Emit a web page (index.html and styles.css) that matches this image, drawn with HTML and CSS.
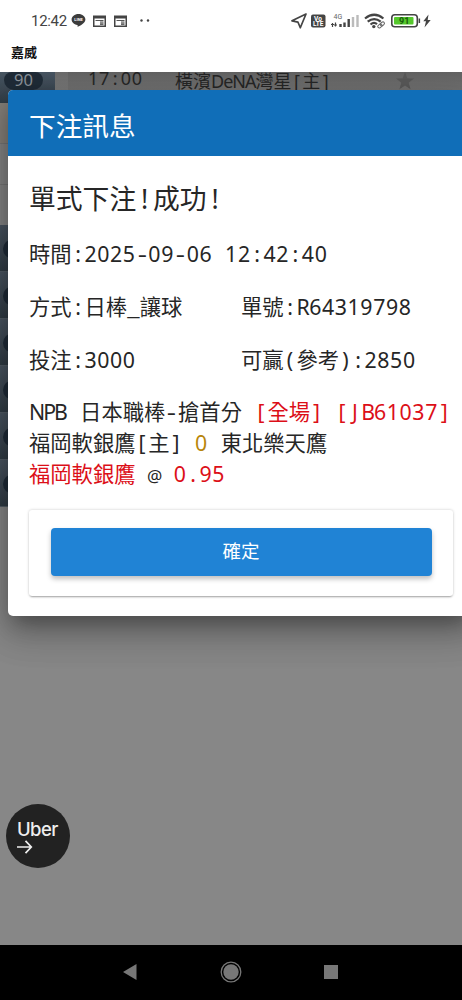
FILE: index.html
```html
<!DOCTYPE html>
<html lang="zh-Hant">
<head>
  <meta charset="UTF-8">
  <meta name="viewport" content="width=device-width, initial-scale=1.0">
  <title>下注訊息</title>
  <link rel="stylesheet" href="styles.css">
</head>
<body>
  <header class="status-bar">
    <span class="clock">12:42</span>
    <svg class="icon-line" width="15" height="15" viewBox="0 0 15 15">
      <path d="M7.5 1C3.6 1 .6 3.5.6 6.6c0 2.8 2.4 5 5.6 5.5.7.2.5.7.4 1.9 2.8-1.3 7.8-4 7.8-7.4C14.4 3.5 11.4 1 7.5 1z" fill="#3c3c3c"/>
      <text x="7.5" y="8.4" text-anchor="middle" class="line-text">LINE</text>
    </svg>
    <svg class="icon-news" width="13" height="12" viewBox="0 0 13 12">
      <path d="M0 .5h13V12H0zM1.500 3.500v7h10v-7z" fill="#444" fill-rule="evenodd"/>
      <path d="M2.500 5.500h8M7 7h3.500M7 8.200h3.500M7 9.400h3.500" stroke="#555"/>
    </svg>
    <svg class="icon-news" width="13" height="12" viewBox="0 0 13 12">
      <path d="M0 .5h13V12H0zM1.500 3.500v7h10v-7z" fill="#444" fill-rule="evenodd"/>
      <path d="M2.500 5.500h8M7 7h3.500M7 8.200h3.500M7 9.400h3.500" stroke="#555"/>
    </svg>
    <svg class="icon-dots" width="10" height="3" viewBox="0 0 10 3">
      <circle cx="1.500" cy="1.500" r="1.200" fill="#444"/>
      <circle cx="8" cy="1.500" r="1.200" fill="#444"/>
    </svg>
    <div class="status-right">
      <svg width="16" height="16" viewBox="0 0 16 16">
        <path d="M15 1L1 7.800l6 1.400 2.300 5.600z" fill="none" stroke="#444" stroke-width="1.700" stroke-linejoin="round"/>
      </svg>
      <svg width="15" height="14" viewBox="0 0 15 14">
        <rect width="14.500" height="13" y=".5" rx="2" fill="#444"/>
        <text x="7" y="6.500" text-anchor="middle" class="volte">Vo</text>
        <text x="7.200" y="12.200" text-anchor="middle" class="volte">LTE</text>
      </svg>
      <svg width="29" height="16" viewBox="0 0 29 16">
        <text x="2.500" y="5.500" class="net">4G</text>
        <path d="M1.500 14V10M0 11.500h3M4.500 9.500v4M3 12h3" stroke="#444" stroke-width="1.200"/>
        <path d="M9.500 14v-3M13.500 14V9.500M17.700 14V6" stroke="#444" stroke-width="2.400"/>
        <path d="M22 14V4M26.500 14V2" stroke="#bbb" stroke-width="2.400"/>
      </svg>
      <svg width="22" height="16" viewBox="0 0 22 16">
        <path d="M1 5.500q9.200-7.500 18.400 0M3.700 8.700q6.500-5.300 13 0M6.500 11.500q3.500-2.900 6.500-.3" fill="none" stroke="#444" stroke-width="2.200"/>
        <circle cx="9.800" cy="13.600" r="1.700" fill="#444"/>
        <g transform="rotate(-40 17 12)" fill="none" stroke="#666">
          <rect x="13.300" y="10.500" width="4.500" height="3" rx="1.500"/>
          <rect x="16.500" y="10.500" width="4.500" height="3" rx="1.500"/>
        </g>
      </svg>
      <svg width="30" height="14" viewBox="0 0 30 14">
        <rect x=".8" y=".8" width="25.500" height="12" rx="3" fill="#fff" stroke="#444" stroke-width="1.600"/>
        <rect x="3" y="3" width="19.500" height="7.600" rx="1" fill="#55c82c"/>
        <rect x="27.600" y="4.500" width="1.500" height="4.500" fill="#444"/>
        <text x="13.200" y="10" text-anchor="middle" class="battery">91</text>
      </svg>
      <svg class="icon-bolt" width="8" height="14" viewBox="0 0 8 14">
        <path d="M5.500.5L.3 7.300h2.700L1.500 13.500 7.700 6H4.700z" fill="#444"/>
      </svg>
    </div>
  </header>
  <div class="app-name">嘉威</div>

  <main class="page">
    <div class="match-row">
      <div class="match-count"><span class="count">90</span></div>
      <div class="match-info">
        <span class="match-time">17<span class="cell">:</span>00</span>
        <span class="match-team">橫濱<span class="latin">DeNA</span>灣星<span class="cell">[</span>主<span class="cell">]</span></span>
        <svg class="star" width="18" height="18" viewBox="0 0 18 18">
          <path d="M9 0l2.300 6.300 6.700.3-5.300 4.100 1.900 6.500L9 13.400l-5.600 3.800 1.900-6.500L0 6.600l6.700-.3z" fill="#5a5a5a"/>
        </svg>
      </div>
    </div>
    <div class="league-rows">
      <div></div>
      <div></div>
      <div></div>
    </div>
    <div class="menu">
      <div class="menu-item"></div>
      <div class="menu-item"></div>
      <div class="menu-item"></div>
      <div class="menu-item"></div>
      <div class="menu-item"></div>
      <div class="menu-item"></div>
    </div>

    <section class="dialog">
      <h1 class="dialog-title">下注訊息</h1>
      <div class="dialog-body">
        <h2 class="result">單式下注<span class="cell">!</span>成功<span class="cell">!</span></h2>
        <div class="field-row">
          <div>時間<span class="cell">:</span><span class="num">2025</span><span class="cell dash">-</span><span class="num">09</span><span class="cell dash">-</span><span class="num">06</span><span class="cell"> </span><span class="num">12</span><span class="cell">:</span><span class="num">42</span><span class="cell">:</span><span class="num">40</span></div>
        </div>
        <div class="field-row">
          <div class="field">方式<span class="cell">:</span>日棒<span class="cell underscore">_</span>讓球</div>
          <div>單號<span class="cell">:</span><span class="cell">R</span><span class="num">64319798</span></div>
        </div>
        <div class="field-row">
          <div class="field">投注<span class="cell">:</span><span class="num">3000</span></div>
          <div>可贏<span class="cell">(</span>參考<span class="cell">)</span><span class="cell">:</span><span class="num">2850</span></div>
        </div>
        <div class="bet">
          <div><span class="npb">NPB</span><span class="cell"> </span>日本職棒<span class="cell dash">-</span>搶首分<span class="cell"> </span><span class="red"><span class="cell">[</span>全場<span class="cell">]</span><span class="cell"> </span><span class="cell">[</span><span class="cell">J</span><span class="cell">B</span><span class="num">61037</span><span class="cell">]</span></span></div>
          <div>福岡軟銀鷹<span class="cell">[</span>主<span class="cell">]</span><span class="cell"> </span><span class="num gold">0</span><span class="cell"> </span>東北樂天鷹</div>
          <div><span class="red">福岡軟銀鷹</span><span class="cell"> </span><span class="cell at">@</span><span class="cell"> </span><span class="red"><span class="num">0</span><span class="cell">.</span><span class="num">95</span></span></div>
        </div>
        <div class="actions">
          <button class="confirm">確定</button>
        </div>
      </div>
    </section>

    <div class="uber">
      <span>Uber</span>
      <svg width="16" height="14" viewBox="0 0 16 14">
        <path d="M0 7h14M8.500.8L14.300 7l-5.800 6.200" fill="none" stroke="#eee" stroke-width="1.700"/>
      </svg>
    </div>
  </main>

  <nav class="nav-bar">
    <svg width="22" height="22" viewBox="0 0 22 22"><path d="M3 11l13.500-8v16z" fill="#777"/></svg>
    <svg width="22" height="22" viewBox="0 0 22 22">
      <circle cx="11" cy="11" r="9.800" fill="none" stroke="#777" stroke-width="1.300"/>
      <circle cx="11" cy="11" r="7.700" fill="#777"/>
    </svg>
    <svg width="22" height="22" viewBox="0 0 22 22"><path d="M4 4h14v14H4z" fill="#777"/></svg>
  </nav>
</body>
</html>
```

FILE: styles.css
```css
* {
  box-sizing: border-box;
}

body {
  margin: 0;
  width: 462px;
  height: 1000px;
  display: flex;
  flex-direction: column;
  overflow: hidden;
  background: #fff;
  font-family: "Noto Sans", "Noto Sans CJK TC", sans-serif;
  color: #262626;
}

svg {
  display: block;
  flex: none;
}

/* phone status bar */
.status-bar {
  height: 40px;
  padding: 1px 31px 0 31px;
  display: flex;
  align-items: center;
}

.clock {
  width: 37px;
  font: 15px Roboto, sans-serif;
  color: #444;
  letter-spacing: -0.3px;
}

.icon-line {
  margin: 0 7px 0 3px;
}

.icon-news {
  margin-right: 8px;
}

.icon-dots {
  margin-left: 5px;
}

.status-right {
  margin-left: auto;
  display: flex;
  align-items: center;
  gap: 4.5px;
}

.icon-bolt {
  margin-left: -2px;
}

.line-text {
  font: bold 4px Roboto, sans-serif;
  fill: #fff;
}

.volte {
  font: bold 6.5px Roboto, sans-serif;
  fill: #fff;
}

.net {
  font: 7px Roboto, sans-serif;
  fill: #666;
}

.battery {
  font: bold 9px Roboto, sans-serif;
  fill: #175c0b;
}

.app-name {
  height: 32px;
  padding-left: 11px;
  font: bold 13px/24px "Noto Sans CJK TC", sans-serif;
  color: #111;
}

/* dimmed page behind the dialog */
.page {
  position: relative;
  height: 873px;
  overflow: hidden;
  background: #878787;
}

.match-row {
  height: 31px;
  display: flex;
  background: linear-gradient(#6d6d6d, #7b7b7b 18px);
}

.match-count {
  width: 55px;
  background: linear-gradient(#485663, #343f49);
}

.count {
  display: block;
  width: 39px;
  height: 18px;
  margin-left: 4px;
  border-radius: 8px 8px 10px 10px;
  background: #202c38;
  color: #8d949b;
  font-size: 16.5px;
  line-height: 16px;
  text-align: center;
}

.match-info {
  flex: 1;
  margin-left: 13px;
  padding: 0 48px 0 20px;
  display: flex;
  align-items: flex-start;
  font-size: 18px;
  line-height: 18px;
  background: linear-gradient(#646464, #747474 18px);
}

.match-time {
  width: 87px;
  margin-top: -3px;
  letter-spacing: 0.7px;
}

.match-team {
  white-space: nowrap;
}

.latin {
  letter-spacing: -1px;
}

.star {
  margin-left: auto;
}

.league-rows {
  height: 122px;
  width: 30px;
}

.league-rows div {
  height: 41px;
  background: #858585;
  border-bottom: 1px solid #767676;
}

.league-rows div:first-child {
  background: #87827b;
}

.menu {
  width: 55px;
}

.menu-item {
  height: 47px;
  padding: 14px 0 0 3px;
  background: linear-gradient(#4b5662, #313c45);
  border-bottom: 1px solid #535d66;
}

.menu-item::before {
  content: "";
  display: block;
  width: 40px;
  height: 20px;
  border-radius: 10px;
  background: #202c38;
}

/* dialog */
.dialog {
  position: absolute;
  top: 18px;
  left: 7.5px;
  width: 466px;
  height: 526px;
  border-radius: 5px;
  overflow: hidden;
  background: #fff;
  box-shadow: 0 12px 20px -6px rgba(0, 0, 0, 0.3), 0 16px 34px 3px rgba(0, 0, 0, 0.16), 0 8px 42px 8px rgba(0, 0, 0, 0.12);
}

.dialog-title {
  height: 66px;
  margin: 0;
  padding-left: 21.5px;
  background: #106eb8;
  color: #fff;
  font-size: 26.67px;
  font-weight: 400;
  line-height: 71px;
}

.dialog-body {
  padding: 12px 20px 0 21.5px;
  font-size: 21.3px;
}

.result {
  height: 59px;
  margin: 0;
  font-size: 26.8px;
  font-weight: 400;
  line-height: 62px;
}

.result .cell {
  width: 0.63em;
}

.field-row {
  display: flex;
  height: 53px;
  line-height: 53px;
  white-space: nowrap;
}

.field {
  width: 212px;
}

.bet {
  padding-top: 10px;
  line-height: 31.2px;
  white-space: nowrap;
}

/* half-width characters sit in equal cells */
.cell {
  display: inline-block;
  width: 0.6em;
  text-align: center;
  white-space: pre;
}

.num {
  letter-spacing: 0.029em;
}

.dash {
  transform: scaleX(1.35);
}

.underscore {
  transform: scaleX(1.3);
}

.npb {
  display: inline-block;
  width: 1.8em;
  letter-spacing: -2px;
}

.at {
  font-size: 0.8em;
  width: 0.75em;
  text-indent: -0.08em;
}

.red {
  color: #dc0f18;
}

.gold {
  color: #b8860b;
}

.actions {
  width: 424px;
  height: 86px;
  margin-top: 18px;
  padding: 18px 21.5px;
  border-radius: 3px;
  box-shadow: 0 2px 2px -1px rgba(0, 0, 0, 0.3), 0 0 3px rgba(0, 0, 0, 0.22);
}

.confirm {
  display: block;
  width: 100%;
  height: 48px;
  padding: 0 0 3px;
  border: 0;
  border-radius: 4px;
  background: #2083d5;
  color: #fff;
  font: 18.5px "Noto Sans CJK TC", sans-serif;
  box-shadow: 0 3px 5px rgba(0, 0, 0, 0.25);
}

/* floating shortcut */
.uber {
  position: absolute;
  left: 6px;
  top: 732px;
  width: 64px;
  height: 64px;
  padding: 14px 0 0 11px;
  border-radius: 50%;
  background: #222;
  color: #eee;
  font: 500 18.5px/22px Inter, sans-serif;
  letter-spacing: -0.6px;
}

.uber span {
  display: block;
}

/* system navigation */
.nav-bar {
  flex: 1;
  display: flex;
  justify-content: center;
  gap: 78px;
  padding-top: 16px;
  background: #000;
}
```
